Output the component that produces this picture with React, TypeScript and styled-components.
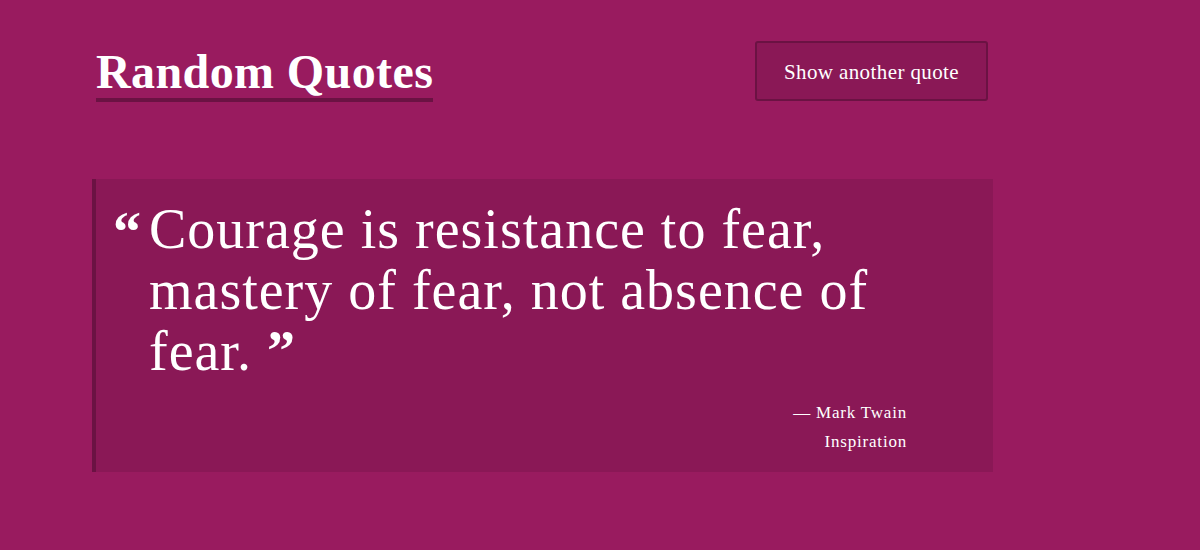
import React from "react";
import styled, { createGlobalStyle } from "styled-components";

const Global = createGlobalStyle`
  html, body { margin: 0; padding: 0; background: #991b5f; }
  body { font-family: "Liberation Serif", "DejaVu Serif", serif; color: #fff; }
`;

const Page = styled.div`
  width: 1200px;
  height: 550px;
  background: #991b5f;
  padding: 41px 0 0 92px;
  box-sizing: border-box;
`;

const Container = styled.div`
  width: 901px;
`;

const Header = styled.header`
  display: flex;
  justify-content: space-between;
  align-items: flex-start;
  padding: 0 5px 0 4px;
`;

const Title = styled.h1`
  margin: 7px 0 0;
  font-size: 48px;
  font-weight: 700;
  line-height: 48px;
  padding-bottom: 2px;
  border-bottom: 4px solid #6b1243;
  letter-spacing: 0.4px;
`;

const Button = styled.button`
  width: 233px;
  height: 60px;
  background: #8a1856;
  border: 2px solid #6b1243;
  border-radius: 3px;
  color: #fff;
  font-family: inherit;
  font-size: 21px;
  letter-spacing: 0.4px;
  padding: 2px 0 0;
  cursor: pointer;
`;

const Card = styled.blockquote`
  margin: 77px 0 0;
  background: #8a1856;
  border-left: 4px solid #6b1243;
  height: 293px;
  box-sizing: border-box;
  padding: 20px 86px 0 17px;
  display: grid;
  grid-template-columns: 36px 1fr;
`;

const Mark = styled.span`
  font-size: 56px;
  font-weight: 700;
  line-height: 66px;
`;

const Text = styled.p`
  margin: 0;
  font-size: 56px;
  line-height: 61px;
  letter-spacing: 1px;
  max-width: 740px;
`;

const Close = styled.b`
  font-size: 56px;
  line-height: 1;
`;

const Footer = styled.div`
  grid-column: 2;
  text-align: right;
  font-size: 17px;
  letter-spacing: 0.8px;
  line-height: 29px;
  margin-top: 0;
`;

export default function App() {
  return (
    <>
      <Global />
      <Page>
        <Container>
          <Header>
            <Title>Random Quotes</Title>
            <Button>Show another quote</Button>
          </Header>
          <Card>
            <Mark>“</Mark>
            <Text>
              Courage is resistance to fear, mastery of fear, not absence of fear. <Close>”</Close>
            </Text>
            <Footer>
              <div>— Mark Twain</div>
              <div>Inspiration</div>
            </Footer>
          </Card>
        </Container>
      </Page>
    </>
  );
}
